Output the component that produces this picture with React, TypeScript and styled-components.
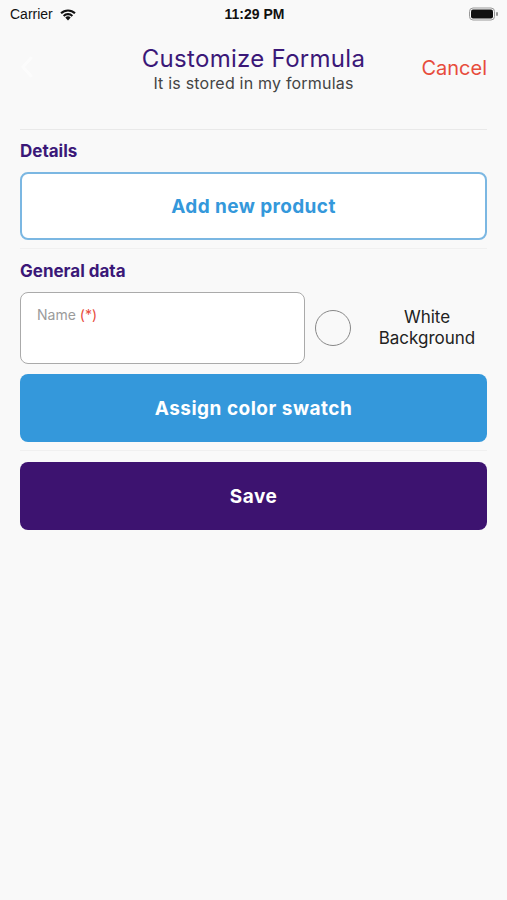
import React, { useState } from 'react';
import styled, { createGlobalStyle } from 'styled-components';

const GlobalStyle = createGlobalStyle`
  html, body {
    margin: 0;
    padding: 0;
    background: #f9f9f9;
  }
  body {
    font-family: "Inter", "Liberation Sans", Arial, sans-serif;
  }
`;

const Screen = styled.div`
  width: 507px;
  min-height: 900px;
  background: #f9f9f9;
  display: flex;
  flex-direction: column;
`;

const StatusBar = styled.div`
  height: 28px;
  display: grid;
  grid-template-columns: 1fr auto 1fr;
  align-items: center;
  padding: 0 8px 0 10px;
  font-size: 14px;
  color: #111;
`;

const Carrier = styled.div`
  display: flex;
  align-items: center;
  gap: 6px;
  font-family: "Liberation Sans", Arial, sans-serif;
`;

const Clock = styled.div`
  font-weight: 700;
  font-family: "Liberation Sans", Arial, sans-serif;
`;

const Battery = styled.div`
  justify-self: end;
  display: flex;
  align-items: center;
`;

const NavBar = styled.div`
  height: 102px;
  display: grid;
  grid-template-columns: 80px 1fr 80px;
  align-items: start;
  padding-top: 16px;
  box-sizing: border-box;
  border-bottom: 1px solid #e9e9e9;
  margin: 0 20px;
`;

const Back = styled.div`
  padding-top: 12px;
  opacity: 0.6;
`;

const TitleBlock = styled.div`
  display: flex;
  flex-direction: column;
  align-items: center;
`;

const Title = styled.div`
  font-size: 24px;
  color: #3b1878;
  line-height: 30px;
  letter-spacing: 0.3px;
`;

const Subtitle = styled.div`
  font-size: 16px;
  color: #444;
  line-height: 18px;
  letter-spacing: 0.2px;
`;

const Cancel = styled.div`
  justify-self: end;
  padding-top: 12px;
  font-size: 20px;
  color: #e74c3c;
`;

const Content = styled.div`
  padding: 10px 20px 0;
  display: flex;
  flex-direction: column;
`;

const SectionLabel = styled.div`
  font-size: 17px;
  font-weight: 700;
  color: #3b1878;
  line-height: 22px;
  margin-bottom: 10px;
`;

const OutlineButton = styled.button`
  height: 68px;
  width: 100%;
  border: 2px solid #7bb7e2;
  border-radius: 8px;
  background: #fff;
  color: #3498db;
  font-family: inherit;
  font-size: 19px;
  font-weight: 700;
  letter-spacing: 0.4px;
  cursor: pointer;
`;

const Separator = styled.div`
  height: 1px;
  background: #f0f0f0;
  margin: 8px 0 11px;
`;

const Row = styled.div`
  display: flex;
  align-items: center;
  gap: 10px;
  margin-bottom: 10px;
`;

const Field = styled.div`
  width: 285px;
  height: 72px;
  box-sizing: border-box;
  border: 1.5px solid #aaaaaa;
  border-radius: 8px;
  background: #fff;
  padding: 13px 16px;
`;

const FieldLabel = styled.div`
  font-size: 14px;
  color: #9b9b9b;
`;

const Required = styled.span`
  color: #e74c3c;
`;

const Radio = styled.div<{ $checked: boolean }>`
  width: 34px;
  height: 34px;
  border-radius: 50%;
  border: 1.5px solid #888;
  background: ${(p) => (p.$checked ? '#fff' : 'transparent')};
  flex-shrink: 0;
  cursor: pointer;
`;

const RadioText = styled.div`
  flex: 1;
  text-align: center;
  font-size: 17px;
  line-height: 21px;
  color: #222;
  padding-left: 6px;
`;

const FilledButton = styled.button<{ $bg: string }>`
  height: 68px;
  width: 100%;
  border: none;
  border-radius: 8px;
  background: ${(p) => p.$bg};
  color: #fff;
  font-family: inherit;
  font-size: 19px;
  font-weight: 700;
  letter-spacing: 0.5px;
  cursor: pointer;
`;

function App() {
  const [white, setWhite] = useState(false);

  return (
    <Screen>
      <GlobalStyle />
      <StatusBar>
        <Carrier>
          Carrier
          <svg width="18" height="13" viewBox="0 0 18 13">
            <path d="M9 12.5 L6.3 9.6 A3.8 3.8 0 0 1 11.7 9.6 Z" fill="#111" />
            <path d="M3.9 7.2 A7.2 7.2 0 0 1 14.1 7.2 L12.6 8.7 A5.1 5.1 0 0 0 5.4 8.7 Z" fill="#111" />
            <path d="M1.3 4.6 A10.9 10.9 0 0 1 16.7 4.6 L15.2 6.1 A8.8 8.8 0 0 0 2.8 6.1 Z" fill="#111" />
          </svg>
        </Carrier>
        <Clock>11:29 PM</Clock>
        <Battery>
          <svg width="30" height="14" viewBox="0 0 30 14">
            <rect x="0.5" y="1" width="25" height="12" rx="3.5" fill="none" stroke="#999" />
            <rect x="2" y="2.5" width="22" height="9" rx="2" fill="#111" />
            <rect x="27" y="5" width="2" height="4" rx="1" fill="#999" />
          </svg>
        </Battery>
      </StatusBar>

      <NavBar>
        <Back>
          <svg width="14" height="22" viewBox="0 0 14 22">
            <path d="M11 2 L3 11 L11 20" stroke="#fff" strokeWidth="3" fill="none" strokeLinecap="round" />
          </svg>
        </Back>
        <TitleBlock>
          <Title>Customize Formula</Title>
          <Subtitle>It is stored in my formulas</Subtitle>
        </TitleBlock>
        <Cancel>Cancel</Cancel>
      </NavBar>

      <Content>
        <SectionLabel>Details</SectionLabel>
        <OutlineButton>Add new product</OutlineButton>
        <Separator />
        <SectionLabel>General data</SectionLabel>
        <Row>
          <Field>
            <FieldLabel>
              Name <Required>(*)</Required>
            </FieldLabel>
          </Field>
          <Radio $checked={white} onClick={() => setWhite(!white)} />
          <RadioText>
            White
            <br />
            Background
          </RadioText>
        </Row>
        <FilledButton $bg="#3498db">Assign color swatch</FilledButton>
        <Separator />
        <FilledButton $bg="#3d1370">Save</FilledButton>
      </Content>
    </Screen>
  );
}

export default App;
